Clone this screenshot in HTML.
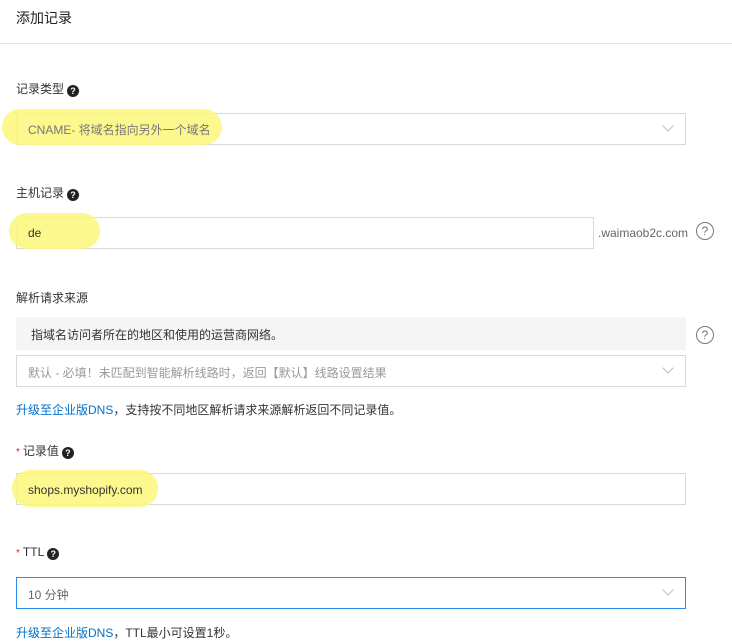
<!DOCTYPE html>
<html><head><meta charset="utf-8"><style>
*{margin:0;padding:0;box-sizing:border-box}
body{width:732px;height:642px;background:#fff;position:relative;overflow:hidden;font-family:"Liberation Sans","Noto Sans CJK SC",sans-serif;color:#333;font-size:12px}
.a{position:absolute;white-space:nowrap}
.box{position:absolute;border:1px solid #d9d9d9;background:#fff}
.hl{position:absolute;background:#fbf77a;opacity:.85;border-radius:18px}
.q{display:inline-block;width:12px;height:12px;border-radius:50%;background:#222;color:#fff;font-size:9px;line-height:12px;text-align:center;font-weight:bold;vertical-align:-1px;margin-left:3px}
.c{position:absolute;width:18px;height:18px;border:1px solid #777;border-radius:50%;color:#777;font-size:12px;line-height:16px;text-align:center}
.arr{position:absolute;width:8px;height:8px;border-right:1px solid #bbb;border-bottom:1px solid #bbb;transform:rotate(45deg)}
.star{color:#e02020;margin-right:3px;font-size:10px}
.link{color:#0070cc}
</style></head><body>
<div class="a" style="left:16px;top:8px;font-size:14px;color:#222">添加记录</div>
<div class="a" style="left:0;top:43px;width:732px;height:1px;background:#e5e5e5"></div>

<div class="a" style="left:16px;top:80px">记录类型<span class="q">?</span></div>
<div class="box" style="left:16px;top:113px;width:670px;height:32px"></div>
<div class="hl" style="left:2px;top:109px;width:220px;height:36px"></div>
<div class="a" style="left:28px;top:121px;color:#777">CNAME- 将域名指向另外一个域名</div>
<div class="arr" style="left:664px;top:122px"></div>

<div class="a" style="left:16px;top:184px">主机记录<span class="q">?</span></div>
<div class="box" style="left:16px;top:217px;width:578px;height:32px"></div>
<div class="hl" style="left:9px;top:213px;width:91px;height:36px"></div>
<div class="a" style="left:28px;top:226px;color:#333">de</div>
<div class="a" style="left:598px;top:226px;color:#666">.waimaob2c.com</div>
<div class="c" style="left:696px;top:222px">?</div>

<div class="a" style="left:16px;top:289px">解析请求来源</div>
<div class="a" style="left:16px;top:317px;width:670px;height:33px;background:#f5f5f5"></div>
<div class="a" style="left:31px;top:326px;color:#333">指域名访问者所在的地区和使用的运营商网络。</div>
<div class="c" style="left:696px;top:326px">?</div>
<div class="box" style="left:16px;top:355px;width:670px;height:32px"></div>
<div class="a" style="left:28px;top:364px;color:#999">默认 - 必填！未匹配到智能解析线路时，返回【默认】线路设置结果</div>
<div class="arr" style="left:664px;top:364px"></div>
<div class="a" style="left:16px;top:401px"><span class="link">升级至企业版DNS</span>，支持按不同地区解析请求来源解析返回不同记录值。</div>

<div class="a" style="left:16px;top:442px"><span class="star">*</span>记录值<span class="q">?</span></div>
<div class="box" style="left:16px;top:473px;width:670px;height:32px"></div>
<div class="hl" style="left:12px;top:470px;width:146px;height:37px"></div>
<div class="a" style="left:28px;top:483px;color:#333">shops.myshopify.com</div>

<div class="a" style="left:16px;top:545px"><span class="star">*</span>TTL<span class="q">?</span></div>
<div class="box" style="left:16px;top:577px;width:670px;height:32px;border-color:#2f8ce6"></div>
<div class="a" style="left:28px;top:586px;color:#666">10 分钟</div>
<div class="arr" style="left:664px;top:586px"></div>
<div class="a" style="left:16px;top:624px"><span class="link">升级至企业版DNS</span>，TTL最小可设置1秒。</div>
</body></html>
